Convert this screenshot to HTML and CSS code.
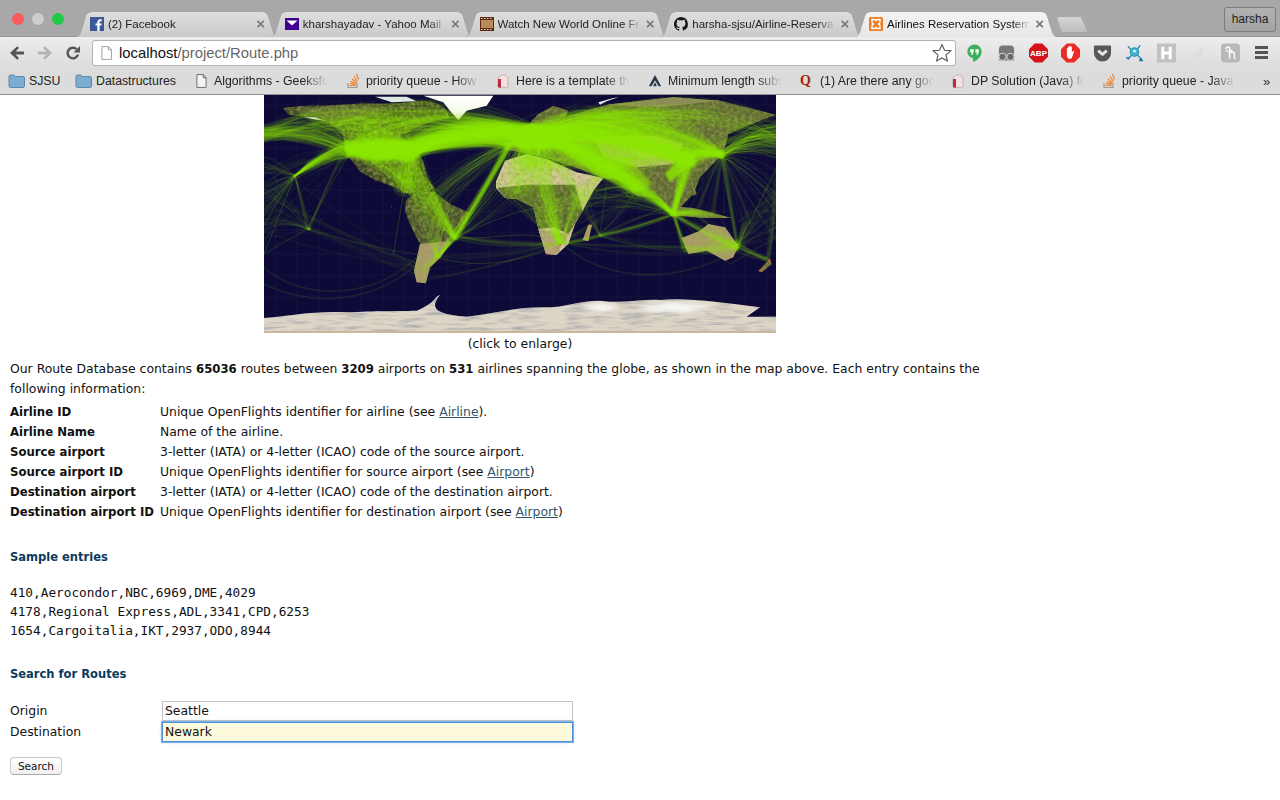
FILE: index.html
```html
<!DOCTYPE html>
<html lang="en">
<head>
<meta charset="utf-8">
<title>Airlines Reservation System</title>
<link rel="stylesheet" href="styles.css">
</head>
<body>
<header class="chrome">
  <div class="tabstrip">
    <div class="lights"><i class="light red"></i><i class="light grey"></i><i class="light green"></i></div>
    <div class="tabs">
      <div class="tab"><svg class="fav" viewBox="0 0 14 14"><rect width="14" height="14" fill="#3b5998"/><path d="M9.6 14V8.6h1.800l.3-2.100H9.600V5.200c0-.6.200-1 1-1h1.200V2.300c-.2 0-.9-.1-1.700-.1-1.700 0-2.800 1-2.800 2.900v1.400H5.500v2.100h1.800V14z" fill="#fff"/></svg><span class="tab-title">(2) Facebook</span><span class="x">×</span></div>
      <div class="tab"><svg class="fav" viewBox="0 0 14 14"><rect width="14" height="12" y="1" fill="#400090"/><path d="M1.500 3.500h11L7 8.500z" fill="#fff"/></svg><span class="tab-title">kharshayadav - Yahoo Mail</span><span class="x">×</span></div>
      <div class="tab"><svg class="fav" viewBox="0 0 14 14"><rect width="14" height="14" fill="#5b2e14"/><rect x="1" y="3" width="12" height="8" fill="#b98a5a"/><path d="M1 1h1.500v1H1zM4 1h1.500v1H4zM7 1h1.500v1H7zM10 1h1.500v1H10zM1 12h1.500v1H1zM4 12h1.500v1H4zM7 12h1.500v1H7zM10 12h1.500v1H10z" fill="#e8d8c0"/></svg><span class="tab-title">Watch New World Online Fr</span><span class="x">×</span></div>
      <div class="tab"><svg class="fav" viewBox="0 0 16 16"><path fill="#161614" d="M8 0a8 8 0 0 0-2.500 15.600c.4.100.500-.2.500-.4v-1.400c-2.200.500-2.700-1.100-2.700-1.100-.4-.9-.9-1.200-.9-1.200-.7-.5.100-.5.100-.5.800.100 1.200.800 1.200.800.700 1.200 1.900.900 2.300.700.100-.5.300-.9.500-1.100-1.800-.2-3.600-.9-3.600-4 0-.9.300-1.600.800-2.100-.1-.2-.4-1 .100-2.100 0 0 .700-.2 2.200.800a7.500 7.500 0 0 1 4 0c1.500-1 2.200-.8 2.200-.8.400 1.100.200 1.900.100 2.100.500.500.800 1.200.800 2.100 0 3.100-1.900 3.800-3.700 4 .3.300.6.800.6 1.500v2.200c0 .2.100.5.600.4A8 8 0 0 0 8 0z"/></svg><span class="tab-title">harsha-sjsu/Airline-Reserva</span><span class="x">×</span></div>
      <div class="tab active"><svg class="fav" viewBox="0 0 14 14"><rect width="14" height="14" rx="1.500" fill="#f07c24"/><path d="M3 2.500h2.500c.8 0 1.500.8 1.500 2 0-1.200.7-2 1.500-2H11v2.800c0 .8-.8 1.500-2 1.700 1.200.2 2 .9 2 1.700v2.800H8.500c-.8 0-1.500-.8-1.500-2 0 1.200-.7 2-1.500 2H3V8.700c0-.8.800-1.500 2-1.700-1.200-.2-2-.9-2-1.700z" fill="none" stroke="#fff" stroke-width="1.400"/></svg><span class="tab-title">Airlines Reservation System</span><span class="x">×</span></div>
      <div class="newtab"></div>
    </div>
    <div class="user">harsha</div>
  </div>
  <div class="toolbar">
    <div class="nav">
      <svg class="navicon" viewBox="0 0 16 16"><path d="M15 6.500H6.500L10 3 8.200 1.300 1 8l7.200 6.700L10 13 6.500 9.500H15z" fill="#555"/></svg>
      <svg class="navicon" viewBox="0 0 16 16"><path d="M1 6.500h8.500L6 3l1.800-1.700L15 8l-7.200 6.700L6 13l3.500-3.500H1z" fill="#b4b4b4"/></svg>
      <svg class="navicon" viewBox="0 0 16 16"><path d="M13 9.500A5.300 5.300 0 1 1 11.600 4.200" fill="none" stroke="#555" stroke-width="2.400"/><path d="M15 1v6.500H8.500z" fill="#555"/></svg>
    </div>
    <div class="omnibox">
      <svg class="page" viewBox="0 0 12 15"><path d="M1 .5h7l3.500 3.500v10.500H1z" fill="#fff" stroke="#999"/><path d="M8 .5V4h3.500" fill="none" stroke="#999"/></svg>
      <span class="url"><span class="host">localhost</span>/project/Route.php</span>
      <svg class="star" viewBox="0 0 20 20"><path d="M10 1.500l2.500 5.700 6.200.6-4.700 4.100 1.400 6.100L10 14.900l-5.400 3.100L6 11.900 1.300 7.800l6.200-.6z" fill="#fff" stroke="#555" stroke-width="1.100"/></svg>
    </div>
    <div class="exts">
      <svg class="ext" viewBox="0 0 20 20"><path d="M10 1a7.500 7.500 0 0 0-7.500 7.500C2.500 13 6 15 8.500 15.500V19.500c4-1.500 9-5.500 9-11A7.500 7.500 0 0 0 10 1z" fill="#3bb05c"/><path d="M5.500 6h3.500v3.500L7.500 12H6.500l.7-2.500H5.500zM11 6h3.500v3.500L13 12h-1l.7-2.500H11z" fill="#fff"/></svg>
      <svg class="ext" viewBox="0 0 20 20"><path d="M2 6a4 4 0 0 1 4-4h8a4 4 0 0 1 4 4v12H2z" fill="#777"/><circle cx="5.800" cy="14" r="3.800" fill="#6a6a6a" stroke="#ddd" stroke-width="1"/><circle cx="14.200" cy="14" r="3.800" fill="#6a6a6a" stroke="#ddd" stroke-width="1"/></svg>
      <svg class="ext" viewBox="0 0 20 20"><path d="M6 0h8l6 6v8l-6 6H6l-6-6V6z" fill="#d5111a"/><text x="10" y="13.500" class="abp">ABP</text></svg>
      <svg class="ext" viewBox="0 0 20 20"><path d="M6 0h8l6 6v8l-6 6H6l-6-6V6z" fill="#ea2b26"/><path d="M6.200 9V5.500c0-1 1.200-1 1.200 0V4c0-1 1.300-1 1.300 0v-.8c0-1 1.400-1 1.400 0V4c0-1 1.300-1 1.300 0v5.500l1.300-1.500c.7-.7 1.500 0 1 .7L11.500 15c-.5.700-1 1-2 1-2 0-3.300-1-3.300-3.500z" fill="#fff"/></svg>
      <svg class="ext" viewBox="0 0 20 20"><path d="M1 3a1 1 0 0 1 1-1h16a1 1 0 0 1 1 1v7a9 9 0 0 1-18 0z" fill="#55595c"/><path d="M5.500 7.500l4.500 4 4.500-4" fill="none" stroke="#e6e6e6" stroke-width="3"/></svg>
      <svg class="ext" viewBox="0 0 20 20"><g stroke="#1d86a8" stroke-width="1.400" fill="none"><path d="M7 12l-4 5M13 12l5 5M7 7L3 3M13 6l3-4M1 15h3M15 18h4"/></g><circle cx="10" cy="9" r="4.500" fill="#3fb4d8" stroke="#1d86a8"/><circle cx="10" cy="8" r="1.500" fill="#e8f8ff"/><path d="M16 15l3 3h-4z" fill="#1d6a88"/></svg>
      <svg class="ext" viewBox="0 0 20 20"><rect width="20" height="20" fill="#c2c2c2"/><path d="M4.500 3.500h3.200v5h4.600v-5h3.200v13h-3.200v-5H7.700v5H4.500z" fill="#fff"/></svg>
      <svg class="ext" viewBox="0 0 20 20"><path d="M17 1L3 14l4 .5-3 5 13-11-4-.5z" fill="#dedede"/></svg>
      <svg class="ext" viewBox="0 0 20 20"><rect width="20" height="20" rx="4" fill="#b8b8b8"/><path d="M5 6c0-2 2-2.500 4-2v12M9 10c2-2 5-1 5 1v3c0 1 .5 2 1.500 2M5 8l7-1" fill="none" stroke="#fff" stroke-width="1.500"/></svg>
      <div class="menu"><i></i><i></i><i></i></div>
    </div>
  </div>
  <div class="bookmarks">
    <div class="bm folder"><svg class="folder-ic" viewBox="0 0 17 14"><path d="M1 2.500C1 1.500 1.500 1 2.500 1H6l1.500 1.500h7.500c1 0 1.500.5 1.500 1.500v8c0 1-.5 1.500-1.500 1.500h-12.500c-1 0-1.500-.5-1.500-1.500z" fill="#7cacd0" stroke="#5c86a6"/></svg><span>SJSU</span></div>
    <div class="bm folder2"><svg class="folder-ic" viewBox="0 0 17 14"><path d="M1 2.500C1 1.500 1.500 1 2.500 1H6l1.500 1.500h7.500c1 0 1.500.5 1.500 1.500v8c0 1-.5 1.500-1.500 1.500h-12.500c-1 0-1.500-.5-1.500-1.500z" fill="#7cacd0" stroke="#5c86a6"/></svg><span>Datastructures</span></div>
    <div class="bm b-algo"><svg class="doc-ic" viewBox="0 0 12 15"><path d="M1 .5h7l3 3.500v10.500H1z" fill="#f4f4f4" stroke="#666"/><path d="M8 .5V4h3" fill="none" stroke="#666"/></svg><span class="fade">Algorithms - Geeksfo</span></div>
    <div class="bm b-pq"><svg class="bm-ic" viewBox="0 0 14 16"><path d="M2 10v4.500h9V10" fill="none" stroke="#999" stroke-width="1.200"/><path d="M3.500 12.500h6M3.800 10.500l5.800.8M4.500 8.500l5.500 2M6 6l4.500 3.500M8 3.500l3.500 5M10.500 1l2 5.500" stroke="#f48024" stroke-width="1.200" fill="none"/></svg><span class="fade">priority queue - How</span></div>
    <div class="bm b-tmpl"><svg class="bm-ic" viewBox="0 0 14 16"><path d="M2 5c2-4 8-4 10 0v9l-2 1-3-1-3 1-2-1z" fill="#f0e2e2" stroke="#c8a0a0" stroke-width=".8"/><path d="M2 6h3v8l-1 1-2-1z" fill="#c0283c"/></svg><span class="fade">Here is a template th</span></div>
    <div class="bm b-min"><svg class="bm-ic" viewBox="0 0 16 16"><path d="M8 1l7 13h-3L8 7 4 14H1z" fill="#27364e"/><path d="M8 9l2 5H6z" fill="#27364e"/></svg><span class="fade">Minimum length subs</span></div>
    <div class="bm b-q"><span class="q">Q</span><span class="fade">(1) Are there any goo</span></div>
    <div class="bm b-dp"><svg class="bm-ic" viewBox="0 0 14 16"><path d="M2 5c2-4 8-4 10 0v9l-2 1-3-1-3 1-2-1z" fill="#f0e2e2" stroke="#c8a0a0" stroke-width=".8"/><path d="M2 6h3v8l-1 1-2-1z" fill="#c0283c"/></svg><span class="fade">DP Solution (Java) fo</span></div>
    <div class="bm b-pq2"><svg class="bm-ic" viewBox="0 0 14 16"><path d="M2 10v4.500h9V10" fill="none" stroke="#999" stroke-width="1.200"/><path d="M3.500 12.500h6M3.800 10.500l5.800.8M4.500 8.500l5.500 2M6 6l4.500 3.500M8 3.500l3.500 5M10.500 1l2 5.500" stroke="#f48024" stroke-width="1.200" fill="none"/></svg><span class="fade">priority queue - Java</span></div>
    <div class="more">»</div>
  </div>
</header>

<main class="page-body">
  <figure class="figure">
    <svg class="map" viewBox="12 3 1536 714" preserveAspectRatio="none" role="img" aria-label="World map of airline routes">
      <defs>
        <filter id="mottle" x="0" y="0" width="100%" height="100%"><feGaussianBlur stdDeviation="1.500" result="base"/><feTurbulence type="fractalNoise" baseFrequency="0.09" numOctaves="3" seed="4"/><feColorMatrix values="0 0 0 0 .3  0 0 0 0 .3  0 0 0 0 .1  1.600 0 0 0 -.62"/><feComposite in2="base" operator="in" result="n"/><feMerge><feMergeNode in="base"/><feMergeNode in="n"/></feMerge></filter>
        <filter id="ice" x="0" y="0" width="100%" height="100%"><feTurbulence type="fractalNoise" baseFrequency="0.012 0.09" numOctaves="3" seed="9"/><feColorMatrix values="0 0 0 0 .32  0 0 0 0 .34  0 0 0 0 .38  2.200 0 0 0 -1.000"/><feComposite in2="SourceAlpha" operator="in"/><feMerge><feMergeNode in="SourceGraphic"/><feMergeNode/></feMerge></filter>
        <filter id="soft"><feGaussianBlur stdDeviation="7"/></filter>
        <filter id="soft2"><feGaussianBlur stdDeviation="3.500"/></filter>
        <linearGradient id="gland" x1="0" y1="0" x2="0" y2="1"><stop offset="0" stop-color="#ffffff"/><stop offset=".65" stop-color="#f4fbe6"/><stop offset="1" stop-color="#c0ea66"/></linearGradient>
        <pattern id="grid" width="64" height="64" patternUnits="userSpaceOnUse"><path d="M48 0v64M0 32h64" fill="none" stroke="#5a5a6c" stroke-width="1" stroke-dasharray="5 4" opacity=".5"/></pattern>
      </defs>
      <rect x="12" y="3" width="1536" height="714" fill="#0e0a38"/>
      <rect x="12" y="3" width="1536" height="714" fill="url(#grid)"/>
      <!-- land -->
      <g filter="url(#mottle)">
        <path fill="#3e4a24" d="M70 42C130 32 200 36 280 30 340 26 400 34 470 22 510 16 545 30 560 50L570 72 520 80 470 100 420 128 470 172 490 200 500 250 525 285 470 298 430 298 420 285 345 258 300 232 258 178 250 125 205 85 140 68 85 62z"/>
        <path fill="#5a6234" d="M90 45L280 32 400 38 330 70 240 85 150 62z"/>
        <path fill="#46522a" d="M438 318L470 295 520 292 570 330 632 358 612 400 575 440 542 490 510 520 497 568 470 565 462 530 480 450 450 392 435 350z"/>
        <path fill="#ab9c6e" d="M480 450L575 440 542 490 510 520 497 568 470 565 462 530z"/>
        <path fill="#d8c8a2" d="M708 262L735 200 800 180 860 195 950 235 1030 252 1000 290 968 350 945 390 925 450 890 482 858 480 835 405 820 340 770 315 735 312 708 282z"/>
        <path fill="#55652c" d="M712 282L800 272 945 272 968 350 925 420 880 400 835 405 820 340 770 315 735 312z"/>
        <path fill="#b9a67c" d="M835 405L925 420 890 482 858 480z"/>
        <path fill="#5e6a30" d="M832 62L880 35 925 50 915 70 1040 32 1240 10 1380 20 1548 62 1470 92 1405 120 1390 178 1320 250 1300 300 1240 362 1190 312 1130 305 1095 262 1030 252 960 225 840 185 730 165 790 110z"/>
        <path fill="#8c8a58" d="M1040 32L1240 10 1380 20 1200 40z"/>
        <path fill="#c2b488" d="M1000 130L1180 125 1270 150 1240 210 1130 220 1030 190z"/>
        <path fill="#d8cca8" d="M1105 160L1190 155 1215 185 1140 192z"/>
        <path fill="#6d7a36" d="M1185 320L1220 335 1300 342 1415 372 1330 372 1250 365z"/>
        <path fill="#ad9c6c" d="M1265 432L1320 410 1345 390 1395 400 1435 455 1420 490 1395 500 1340 470 1285 480z"/>
        <path fill="#b09c6c" d="M968 438L985 392 996 392 985 442z"/>
        <path fill="#7a6a3c" d="M1495 530L1530 495 1535 510 1505 535z"/>
        <path fill="#5b6a30" d="M1295 260L1310 300 1300 305 1290 280z"/>
      </g>
      <path fill="#dfe9e6" d="M345 8H440L470 22 395 25z M1015 25L1060 12 1075 10 1040 22 1020 32z M130 70L165 70 195 80 160 76z"/>
      <!-- Antarctica -->
      <path filter="url(#ice)" fill="#ddd5c6" d="M12 672C100 665 160 650 260 655 350 650 400 652 470 650 530 625 520 610 540 603 510 640 520 662 620 668 700 660 760 640 850 640 920 640 960 620 1020 620 1090 630 1140 615 1200 618 1280 610 1380 625 1500 640L1460 668 1548 668V718H12z"/>
      <g filter="url(#soft)">
        <path fill="#f6f6f2" d="M950 640L1020 626 1080 640 1030 655zM1130 640L1230 625 1370 632 1280 655 1170 652z"/>
      </g>
      <path fill="#c8b89c" d="M12 711H1548V718H12z"/>
      <g filter="url(#soft2)">
        <path fill="#8fe800" opacity=".95" d="M745 120C790 85 860 85 900 110 910 140 880 175 820 165 780 170 750 160 745 120z"/>
        <path fill="#8fe800" opacity=".9" d="M258 170C300 135 400 130 470 150 510 140 600 105 760 95L770 130C640 125 540 135 480 180 450 215 430 205 400 195 340 205 290 195 258 170z"/>
        <path fill="#8fe800" opacity=".45" d="M880 100C1000 70 1200 70 1370 165 1300 190 1280 200 1260 215 1150 150 1000 125 880 150z"/>
        <path fill="#8fe800" opacity=".5" d="M870 150L1030 250 1120 300 1180 270 1100 190 1000 150z"/>
        <path fill="#8fe800" opacity=".8" d="M1215 240L1280 165 1310 205 1260 240 1230 265z"/>
      </g>
      <g id="routes" fill="none" stroke="#8fe800" stroke-width="1.300" stroke-linecap="round"></g>
      <path fill="url(#gland)" d="M490 5H700L680 35 620 50 595 78 570 50 550 25z"/>
      <circle cx="148" cy="405" r="4" fill="#6fb010"/>
      <g fill="#d0492c">
        <circle cx="115" cy="250" r="2"/><circle cx="185" cy="375" r="1.500"/><circle cx="45" cy="395" r="1.500"/><circle cx="395" cy="338" r="1.500"/><circle cx="1500" cy="530" r="3"/><circle cx="1525" cy="497" r="2.500"/><circle cx="1495" cy="297" r="1.500"/><circle cx="1305" cy="295" r="2"/><circle cx="900" cy="452" r="2"/><circle cx="530" cy="495" r="2"/><circle cx="860" cy="480" r="2"/><circle cx="1243" cy="367" r="2"/><circle cx="1438" cy="455" r="1.500"/><circle cx="425" cy="297" r="2"/><circle cx="345" cy="260" r="1.500"/><circle cx="775" cy="240" r="1.500"/><circle cx="855" cy="205" r="1.500"/><circle cx="510" cy="300" r="2"/><circle cx="470" cy="350" r="1.500"/><circle cx="545" cy="450" r="1.500"/><circle cx="1050" cy="190" r="1.500"/><circle cx="1200" cy="270" r="1.500"/><circle cx="880" cy="58" r="2"/><circle cx="210" cy="60" r="1.500"/>
      </g>
    </svg>
    <figcaption class="caption">(click to enlarge)</figcaption>
  </figure>

  <p class="intro">Our Route Database contains <b>65036</b> routes between <b>3209</b> airports on <b>531</b> airlines spanning the globe, as shown in the map above. Each entry contains the following information:</p>

  <table class="fields">
    <tr><th>Airline ID</th><td>Unique OpenFlights identifier for airline (see <a href="#">Airline</a>).</td></tr>
    <tr><th>Airline Name</th><td>Name of the airline.</td></tr>
    <tr><th>Source airport</th><td>3-letter (IATA) or 4-letter (ICAO) code of the source airport.</td></tr>
    <tr><th>Source airport ID</th><td>Unique OpenFlights identifier for source airport (see <a href="#">Airport</a>)</td></tr>
    <tr><th>Destination airport</th><td>3-letter (IATA) or 4-letter (ICAO) code of the destination airport.</td></tr>
    <tr><th>Destination airport ID</th><td>Unique OpenFlights identifier for destination airport (see <a href="#">Airport</a>)</td></tr>
  </table>

  <h3 class="heading sample-h">Sample entries</h3>
  <pre class="samples">410,Aerocondor,NBC,6969,DME,4029
4178,Regional Express,ADL,3341,CPD,6253
1654,Cargoitalia,IKT,2937,ODO,8944</pre>

  <h3 class="heading search-h">Search for Routes</h3>
  <form class="search">
    <div class="row"><label class="lbl" for="o">Origin</label><input class="field" id="o" value="Seattle"></div>
    <div class="row"><label class="lbl" for="d">Destination</label><input class="field focus" id="d" value="Newark"></div>
    <button class="btn" type="button">Search</button>
  </form>
</main>
<script src="map.js"></script>
</body>
</html>
```
FILE: styles.css
```css
* { box-sizing: border-box; }
html, body { margin: 0; height: 800px; overflow: hidden; background: #fff; }
body { font-family: "DejaVu Sans", sans-serif; font-size: 12.400px; color: #111; }
b, th, .heading { font-family: "DejaVu Sans Condensed", "DejaVu Sans", sans-serif; }

.chrome { height: 95px; display: flex; flex-direction: column; font-family: "Liberation Sans", Arial, sans-serif; border-bottom: 1px solid #8e8e8e; }
.tabstrip { height: 37px; background: #a8a8a8; display: flex; position: relative; border-bottom: 1px solid #989898; }
.lights { display: flex; gap: 8px; padding: 13px 0 0 12px; width: 75px; flex: none; }
.light { width: 12px; height: 12px; border-radius: 50%; display: block; }
.red { background: #f85a5e; } .grey { background: #cdcdcd; } .green { background: #22c848; }
.tabs { display: flex; padding-top: 12px; flex: 1; }
.tab { width: 204px; height: 25px; flex: none; margin-right: -9.250px; display: flex; align-items: center; padding: 0 14px 2px 15px; font-size: 11.500px; color: #222; position: relative; filter: drop-shadow(0 0 .5px #6e6e6e); }
.tab::before { content: ""; position: absolute; inset: 0; z-index: -1; background: linear-gradient(#dedede, #c9c9c9); clip-path: path("M0 25C3 25 5 23 6 20L11 4C12 1 14 0 17 0L187 0C190 0 192 1 193 4L198 20C199 23 201 25 204 25Z"); }
.tab.active::before { background: linear-gradient(#f4f4f4, #e6e6e6); }
.tab.active { color: #111; }
.fav { width: 14px; height: 14px; flex: none; margin-right: 4px; }
.tab-title { flex: 1; white-space: nowrap; overflow: hidden; -webkit-mask-image: linear-gradient(to right, #000 88%, transparent); mask-image: linear-gradient(to right, #000 88%, transparent); }
.x { color: #777; font-size: 15px; margin-left: 5px; line-height: 1; font-weight: bold; }
.newtab { width: 31px; height: 15px; margin: 5px 0 0 8px; background: linear-gradient(#d5d5d5, #bdbdbd); border-radius: 3px; clip-path: polygon(0 0, 24px 0, 100% 100%, 5px 100%); }
.user { position: absolute; right: 4px; top: 7px; width: 52px; height: 25px; border: 1px solid #7c7c7c; border-radius: 3px; background: linear-gradient(#b2b2b2, #a4a4a4); font-size: 12px; color: #222; text-align: center; line-height: 23px; }

.toolbar { height: 32px; background: linear-gradient(#ededed, #dcdcdc); display: flex; align-items: center; }
.nav { width: 92px; flex: none; display: flex; gap: 12px; padding-left: 9px; }
.navicon { width: 16px; height: 16px; display: block; }
.omnibox { width: 864px; height: 26px; flex: none; background: #fff; border: 1px solid #b3b3b3; border-radius: 3px; display: flex; align-items: center; padding: 0 3px 0 8px; }
.page { width: 11px; height: 14px; flex: none; margin-right: 7px; }
.url { flex: 1; font-size: 14.800px; color: #666; padding-top: 1px; }
.host { color: #111; }
.star { width: 20px; height: 20px; flex: none; }
.exts { display: flex; align-items: center; gap: 13px; padding-left: 9px; }
.ext { width: 19px; height: 20px; flex: none; display: block; }
.abp { font: bold 8.500px "Liberation Sans", sans-serif; fill: #fff; text-anchor: middle; }
.menu { width: 13px; display: flex; flex-direction: column; gap: 2px; margin-left: 2px; }
.menu i { height: 3px; background: #555; display: block; }

.bookmarks { height: 26px; background: #dcdcdc; display: flex; align-items: center; font-size: 12.300px; color: #222; padding-left: 8px; }
.bm { display: flex; align-items: center; flex: none; overflow: hidden; white-space: nowrap; }
.fade { display: block; width: 114px; flex: none; overflow: hidden; -webkit-mask-image: linear-gradient(to right, #000 78%, transparent); mask-image: linear-gradient(to right, #000 78%, transparent); }
.folder-ic { width: 17px; height: 14px; flex: none; margin-right: 4px; }
.bm-ic { width: 14px; height: 16px; flex: none; margin-right: 6px; }
.doc-ic { width: 11px; height: 16px; flex: none; margin: 0 7px 0 0; }
.folder { width: 67px; } .folder2 { width: 121px; } .b-algo { width: 150px; } .b-pq { width: 150px; }
.b-tmpl { width: 152px; } .b-min { width: 152px; } .b-q { width: 151px; } .b-dp { width: 151px; } .b-pq2 { width: 151px; }
.q { color: #a82400; font: bold 14px "Liberation Serif", serif; width: 20px; flex: none; }
.more { margin-left: 10px; color: #333; font-size: 13px; }

.page-body { padding: 0 0 0 10px; width: 990px; }
.figure { margin: 0; width: 1020px; display: flex; flex-direction: column; align-items: center; }
.map { width: 512px; height: 238px; display: block; }
.caption { line-height: 20px; margin-top: 1px; }
.intro { margin: 5px 0 5px; line-height: 20px; }
.intro b { font-size: 13px; }
.fields { border-collapse: collapse; }
.fields th { text-align: left; font-weight: bold; font-size: 13px; padding: 0; width: 150px; height: 20px; white-space: nowrap; vertical-align: baseline; }
.fields td { padding: 0; height: 20px; white-space: nowrap; vertical-align: baseline; }
.fields a { color: #33566b; }
.heading { margin: 0; font-size: 12.800px; font-weight: bold; color: #0b3a5e; line-height: 20px; }
.sample-h { margin-top: 23px; }
.samples { font-family: "DejaVu Sans Mono", monospace; font-size: 12.750px; line-height: 19px; margin: 16px 0 0; color: #111; }
.search-h { margin-top: 24px; }
.search { margin: 16px 0 0; }
.row { display: flex; align-items: center; height: 21px; }
.lbl { width: 152px; flex: none; }
.field { width: 411px; height: 20px; border: 1px solid #c4c4c4; background: #fff; font: 12.400px "DejaVu Sans", sans-serif; color: #111; padding: 0 2px; margin: 0; outline: none; }
.field.focus { background: #fdfbdc; border: 1px solid #4a90d9; box-shadow: 0 0 0 1px #7fb0e6, 0 0 3px #7fb0e6; }
.btn { display: block; margin-top: 15px; width: 52px; height: 18px; padding: 0; border: 1px solid #c8c8c8; border-bottom-color: #aaa; border-radius: 4px; background: linear-gradient(#fff, #f0f0f0); font: 10.500px "DejaVu Sans", sans-serif; color: #111; }
```
FILE: map.js
```js
(function () {
  var seed = 20150417;
  function rnd() { seed = (seed * 1664525 + 1013904223) >>> 0; return seed / 4294967296; }
  function spread() { return (rnd() + rnd() - 1); }

  // Airport regions as [x, y, spreadX, spreadY], in the map's own coordinates.
  var R = {
    EU: [820, 125, 75, 40], IBE: [750, 150, 14, 14], USE: [445, 170, 40, 28], USW: [262, 165, 12, 32], USC: [365, 185, 75, 30],
    CAN: [320, 90, 240, 45], HAW: [105, 245, 3, 3], PAC: [146, 405, 8, 5], CAM: [450, 285, 60, 24],
    SAN: [510, 335, 65, 45], BRA: [585, 432, 10, 10], ARG: [530, 492, 8, 6], SOU: [490, 530, 15, 35],
    AFN: [810, 215, 90, 28], AFW: [770, 295, 55, 20], AFC: [870, 350, 50, 50], AFS: [900, 447, 7, 5],
    AFE: [960, 320, 22, 45], MAD: [1020, 425, 5, 5], ME: [1040, 225, 60, 40], RUS: [1130, 70, 280, 35],
    CAS: [1130, 170, 130, 55], IND: [1135, 290, 35, 32], CHN: [1285, 195, 32, 32], JPN: [1385, 182, 9, 14],
    SEA: [1240, 360, 10, 10], IDN: [1320, 360, 85, 14], AUE: [1432, 458, 8, 20], AUW: [1275, 465, 14, 14],
    AUC: [1350, 430, 60, 30], NZ: [1522, 498, 9, 9], PNG: [1460, 385, 35, 14],
    LFT: [12, 330, 0, 170], LFN: [12, 118, 0, 30], RGT: [1548, 300, 0, 150], RGN: [1548, 130, 0, 70]
  };

  // Route bundles: from, to, count.
  var B = [
    ['EU','USE',480],['EU','USC',170],['EU','USW',90],['EU','EU',300],['EU','CAN',110],['IBE','USE',90],
    ['USE','USW',230],['USE','USE',150],['USC','USW',170],['USC','USE',190],['USC','CAN',130],['USE','CAN',90],['USW','CAN',70],
    ['USE','CAM',170],['USW','CAM',60],['USC','CAM',90],['CAM','SAN',80],['SAN','BRA',100],['BRA','ARG',60],['SAN','ARG',50],['SOU','ARG',30],
    ['BRA','USE',50],['IBE','BRA',90],['IBE','ARG',25],['IBE','SAN',45],['EU','BRA',25],['EU','SAN',35],['USE','BRA',20],
    ['EU','AFN',180],['EU','AFW',130],['EU','AFS',60],['EU','AFE',70],['EU','AFC',90],['AFS','AFC',90],['AFS','AFE',50],['AFS','AFW',40],['AFE','AFC',40],
    ['AFN','AFW',40],['AFS','MAD',12],['MAD','IND',8],['MAD','AUE',5],['MAD','AFE',10],['AFS','AUE',8],['BRA','AFS',10],['ARG','AFS',6],['AFW','BRA',14],
    ['AFE','IND',25],['AFE','SEA',15],['MAD','SEA',14],['AFS','SEA',8],['AFS','IND',10],['SOU','AFS',5],['AFS','BRA',8],
    ['EU','ME',280],['EU','RUS',190],['EU','CAS',280],['EU','IND',200],['EU','CHN',220],['EU','SEA',90],['EU','JPN',80],
    ['ME','IND',130],['ME','SEA',70],['ME','CHN',80],['ME','CAS',110],['ME','AFE',60],['ME','AFN',50],['IND','SEA',90],['IND','CAS',40],
    ['CHN','CHN',170],['CHN','SEA',200],['CHN','JPN',170],['CHN','RUS',90],['CHN','CAS',100],['JPN','RUS',50],['RUS','RUS',70],
    ['JPN','RGN',90],['JPN','RGT',24],['CHN','RGN',40],['SEA','IDN',100],['SEA','AUE',35],['SEA','AUW',35],['IDN','AUE',16],['AUE','AUC',60],['AUE','AUW',30],
    ['AUE','NZ',30],['AUE','PNG',25],['NZ','RGT',14],['AUE','RGT',24],['PNG','RGT',12],['JPN','PNG',12],['JPN','AUE',14],['JPN','IDN',26],
    ['HAW','USW',130],['HAW','LFT',34],['HAW','PAC',8],['USW','LFN',90],['CAN','LFN',60],['USW','LFT',10],['PAC','LFT',24],['PAC','SOU',4],['SOU','LFT',8],
    ['USC','SAN',40],['RUS','RGN',40],['RUS','CAS',80],['USW','PAC',8],['CAN','CAN',50],['LFT','USC',8]
  ];

  function pick(r) { return [r[0] + spread() * r[2], r[1] + spread() * r[3]]; }

  var d = [];
  B.forEach(function (b) {
    for (var i = 0; i < b[2]; i++) {
      var a = pick(R[b[0]]), c = pick(R[b[1]]);
      var south = a[1] > 280 || c[1] > 280;
      var bow = Math.abs(c[0] - a[0]) * (0.02 + rnd() * 0.26);
      if (a[1] > 420 || c[1] > 420) bow = -bow * 0.4;
      var mx = (a[0] + c[0]) / 2, my = (a[1] + c[1]) / 2 - bow;
      var op = (0.14 + rnd() * 0.2) * (south ? 0.72 : 1);
      d.push('<path opacity="' + op.toFixed(2) + '" d="M' + a[0].toFixed(0) + ' ' + a[1].toFixed(0) +
        'Q' + mx.toFixed(0) + ' ' + my.toFixed(0) + ' ' + c[0].toFixed(0) + ' ' + c[1].toFixed(0) + '"/>');
    }
  });

  // Long faint great-circle arcs across the oceans.
  var arcs = [
    'M12 520C120 620 340 620 470 490','M12 570C200 660 380 600 480 500','M530 490C660 530 800 500 900 450',
    'M920 460C1040 560 1240 570 1410 480','M600 430C700 440 800 400 900 445','M140 405C260 440 380 470 470 480',
    'M1020 425C1100 380 1160 350 1235 360','M1020 425C1150 470 1300 480 1420 470','M960 390C1040 330 1130 320 1240 360',
    'M575 435C700 380 800 330 900 340','M105 245L12 350','M105 245L140 405','M105 245L12 480','M140 405L12 480','M140 405L260 190',
    'M1020 425L960 240','M1020 425L1040 270','M1020 425L1210 340','M1380 180L1430 450','M1380 180L1540 300','M1240 360L1410 510','M1240 360L1520 490',
    'M1430 455L1548 400','M1410 510L1548 430','M430 300L400 480','M255 180L12 300','M12 210L105 245','M12 300L105 245'
  ];
  arcs.forEach(function (p) { d.push('<path opacity=".45" d="' + p + '"/>'); });

  document.getElementById('routes').innerHTML = d.join('');
})();
```
